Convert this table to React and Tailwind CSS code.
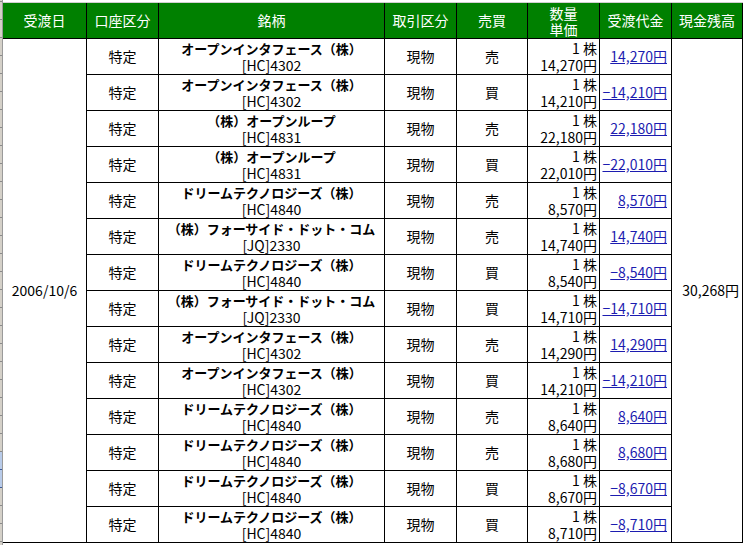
import React from 'react';

const rows = [
  { name: 'オープンインタフェース（株）', code: '[HC]4302', side: '売', price: '14,270円', amount: '14,270円' },
  { name: 'オープンインタフェース（株）', code: '[HC]4302', side: '買', price: '14,210円', amount: '−14,210円' },
  { name: '（株）オープンループ', code: '[HC]4831', side: '売', price: '22,180円', amount: '22,180円' },
  { name: '（株）オープンループ', code: '[HC]4831', side: '買', price: '22,010円', amount: '−22,010円' },
  { name: 'ドリームテクノロジーズ（株）', code: '[HC]4840', side: '売', price: '8,570円', amount: '8,570円' },
  { name: '（株）フォーサイド・ドット・コム', code: '[JQ]2330', side: '売', price: '14,740円', amount: '14,740円' },
  { name: 'ドリームテクノロジーズ（株）', code: '[HC]4840', side: '買', price: '8,540円', amount: '−8,540円' },
  { name: '（株）フォーサイド・ドット・コム', code: '[JQ]2330', side: '買', price: '14,710円', amount: '−14,710円' },
  { name: 'オープンインタフェース（株）', code: '[HC]4302', side: '売', price: '14,290円', amount: '14,290円' },
  { name: 'オープンインタフェース（株）', code: '[HC]4302', side: '買', price: '14,210円', amount: '−14,210円' },
  { name: 'ドリームテクノロジーズ（株）', code: '[HC]4840', side: '売', price: '8,640円', amount: '8,640円' },
  { name: 'ドリームテクノロジーズ（株）', code: '[HC]4840', side: '売', price: '8,680円', amount: '8,680円' },
  { name: 'ドリームテクノロジーズ（株）', code: '[HC]4840', side: '買', price: '8,670円', amount: '−8,670円' },
  { name: 'ドリームテクノロジーズ（株）', code: '[HC]4840', side: '買', price: '8,710円', amount: '−8,710円' },
];

// excel row header slivers on the far left
const stripRows = Array.from({ length: 31 }, (_, i) => i);

const head = 'flex items-center justify-center bg-[#008000] text-white border-r border-b border-black';
const cell = 'border-r border-b border-black';

const App = () => {
  return (
    <div
      className="flex w-[747px] h-[545px] overflow-hidden bg-white text-[14px] text-black"
      style={{ fontFamily: '"Noto Sans CJK JP", "Noto Sans", sans-serif' }}
    >
      <div className="flex flex-col w-[3px] shrink-0 bg-[#d4d0c8] border-r border-[#9a9a9a]">
        <div className="h-[2px] shrink-0 border-b border-[#8a8a8a]" />
        {stripRows.map((i) => (
          <div
            key={i}
            className={`h-[18px] shrink-0 border-b ${
              i === 25 || i === 26 ? 'bg-[#b8cbe9] border-[#3d5a99]' : 'border-[#8a8a8a]'
            }`}
          />
        ))}
      </div>

      <div className="flex flex-col">
        <div className="h-[3px] shrink-0 border-b border-[#d0d0d0]" />
        <div className="grid grid-cols-[84px_72px_226px_72px_71px_72px_72px_71px] grid-rows-[36px_repeat(14,36px)]">
          <div className={head}>受渡日</div>
          <div className={head}>口座区分</div>
          <div className={head}>銘柄</div>
          <div className={head}>取引区分</div>
          <div className={head}>売買</div>
          <div className={`${head} flex-col leading-[16px]`}>
            <span className="leading-[16px]">数量</span>
            <span className="leading-[16px]">単価</span>
          </div>
          <div className={head}>受渡代金</div>
          <div className={head}>現金残高</div>

          <div className={`${cell} col-start-1 row-start-2 row-span-14 flex items-center justify-center`}>
            2006/10/6
          </div>

          {rows.map((r, i) => (
            <React.Fragment key={i}>
              <div className={`${cell} flex items-center justify-center`}>特定</div>
              <div className={`${cell} flex flex-col items-center justify-center leading-[17px]`}>
                <span className="text-[13px] font-bold leading-[17px]">{r.name}</span>
                <span className="leading-[17px]">{r.code}</span>
              </div>
              <div className={`${cell} flex items-center justify-center`}>現物</div>
              <div className={`${cell} flex items-center justify-center`}>{r.side}</div>
              <div className={`${cell} flex flex-col items-end justify-center pr-[2px] leading-[17px]`}>
                <span className="leading-[17px]">1 株</span>
                <span className="leading-[17px]">{r.price}</span>
              </div>
              <div className={`${cell} flex items-center justify-end pr-[4px]`}>
                <span className="text-[#1c1cb0] underline">{r.amount}</span>
              </div>
              {i === 0 && (
                <div className={`${cell} row-span-14 flex items-center justify-end pr-[3px]`}>30,268円</div>
              )}
            </React.Fragment>
          ))}
        </div>
      </div>
    </div>
  );
};

export default App;
